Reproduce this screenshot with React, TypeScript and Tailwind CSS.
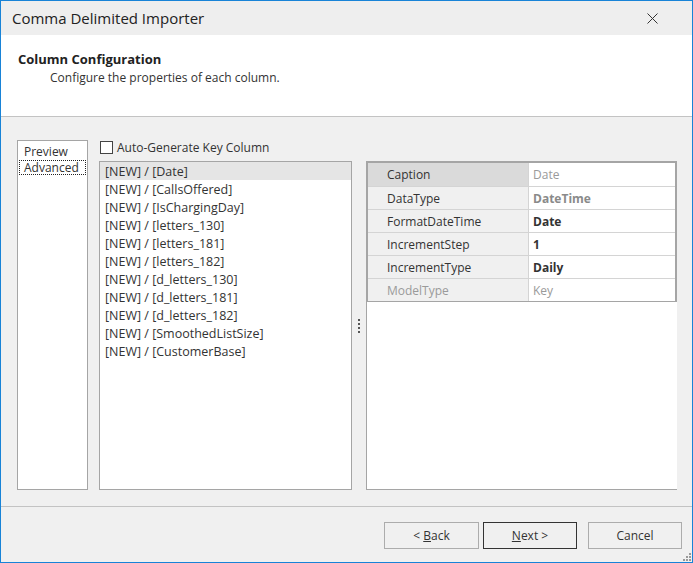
import React from 'react'

const font = { fontFamily: '"Segoe UI", "Open Sans", "Liberation Sans", sans-serif' }

const columns = [
  'Date',
  'CallsOffered',
  'IsChargingDay',
  'letters_130',
  'letters_181',
  'letters_182',
  'd_letters_130',
  'd_letters_181',
  'd_letters_182',
  'SmoothedListSize',
  'CustomerBase',
]

interface PropRow {
  label: string
  value: string
  labelClass: string
  valueClass: string
  selected?: boolean
}

const props: PropRow[] = [
  { label: 'Caption', value: 'Date', labelClass: 'text-[#333]', valueClass: 'text-[#9a9a9a]', selected: true },
  { label: 'DataType', value: 'DateTime', labelClass: 'text-[#333]', valueClass: 'text-[#8a8a8a] font-bold' },
  { label: 'FormatDateTime', value: 'Date', labelClass: 'text-[#333]', valueClass: 'text-[#333] font-bold' },
  { label: 'IncrementStep', value: '1', labelClass: 'text-[#333]', valueClass: 'text-[#333] font-bold' },
  { label: 'IncrementType', value: 'Daily', labelClass: 'text-[#333]', valueClass: 'text-[#333] font-bold' },
  { label: 'ModelType', value: 'Key', labelClass: 'text-[#9a9a9a]', valueClass: 'text-[#9a9a9a]' },
]

function Button({ children, primary, className }: { children: React.ReactNode; primary?: boolean; className?: string }) {
  return (
    <button
      className={`h-[27px] bg-[#f0f0f0] text-[12px] text-[#333] border ${
        primary ? 'border-[#333]' : 'border-[#acacac]'
      } ${className ?? ''}`}
    >
      {children}
    </button>
  )
}

export default function App() {
  return (
    <div
      style={font}
      className="w-[693px] h-[563px] border border-[#1883d7] bg-[#f0f0f0] flex flex-col box-border relative"
    >
      {/* title bar */}
      <div className="h-[34px] bg-[#eeeeee] flex items-center justify-between pl-[11px] pr-[34px] shrink-0">
        <span className="text-[15px] text-[#222]">Comma Delimited Importer</span>
        <svg width="11" height="11" viewBox="0 0 11 11">
          <path d="M0.5 0.5 L10.5 10.5 M10.5 0.5 L0.5 10.5" stroke="#333" strokeWidth="1" />
        </svg>
      </div>

      {/* header */}
      <div className="h-[82px] bg-white border-b border-[#c3c3c3] pt-[15px] pl-[17px] shrink-0">
        <div className="text-[13px] font-bold text-[#222] leading-[18px]">Column Configuration</div>
        <div className="text-[12px] text-[#333] leading-[18px] pl-[32px] mt-[1px]">
          Configure the properties of each column.
        </div>
      </div>

      {/* body */}
      <div className="flex-1 flex pt-[23px] pl-[16px] pr-[15px] pb-[16px] min-h-0">
        <div className="w-[71px] bg-white border border-[#a5a5a5] text-[12px] text-[#333] pt-[2px] pl-[1px] pr-[1px]">
          <div className="h-[17px] leading-[17px] pl-[5px]">Preview</div>
          <div className="h-[15px] leading-[13px] pl-[4px] border border-dotted border-[#222]">Advanced</div>
        </div>

        <div className="w-[253px] ml-[11px] flex flex-col">
          <label className="h-[21px] flex items-start gap-[4px] pl-[1px] pt-[1px] text-[12px] text-[#333]">
            <span className="w-[13px] h-[13px] border border-[#444] bg-white shrink-0" />
            <span className="leading-[13px]">Auto-Generate Key Column</span>
          </label>
          <div className="flex-1 bg-white border border-[#a5a5a5]">
            {columns.map((c, i) => (
              <div
                key={c}
                className={`h-[18px] leading-[19px] pl-[5px] text-[12.5px] text-[#333] ${
                  i === 0 ? 'bg-[#e5e5e5]' : ''
                }`}
              >
                [NEW] / [{c}]
              </div>
            ))}
          </div>
        </div>

        {/* splitter */}
        <div className="w-[14px] mt-[21px] flex flex-col items-center justify-center gap-[2px]">
          <span className="w-[2px] h-[2px] bg-[#555]" />
          <span className="w-[2px] h-[2px] bg-[#555]" />
          <span className="w-[2px] h-[2px] bg-[#555]" />
          <span className="w-[2px] h-[2px] bg-[#555]" />
        </div>

        <div className="w-[311px] mt-[21px] bg-white border-l border-t border-b border-[#a5a5a5]">
          <div className="border-t border-l border-b border-r-[2px] border-[#a5a5a5]">
            {props.map((p, i) => (
              <div
                key={p.label}
                className={`flex h-[23px] text-[12px] ${i > 0 ? 'border-t border-[#d4d4d4]' : ''}`}
              >
                <div
                  className={`w-[161px] pl-[19px] leading-[24px] border-r border-[#d4d4d4] ${
                    p.selected ? 'bg-[#dadada]' : 'bg-[#f0f0f0]'
                  } ${p.labelClass}`}
                >
                  {p.label}
                </div>
                <div className={`flex-1 pl-[4px] leading-[24px] ${p.valueClass}`}>{p.value}</div>
              </div>
            ))}
          </div>
        </div>
      </div>

      {/* footer */}
      <div className="h-[56px] border-t border-[#c3c3c3] flex justify-end items-start pt-[15px] pr-[10px] shrink-0">
        <Button className="w-[95px]">
          &lt; <span className="underline">B</span>ack
        </Button>
        <div className="w-[4px]" />
        <Button primary className="w-[94px]">
          <span className="underline">N</span>ext &gt;
        </Button>
        <div className="w-[11px]" />
        <Button className="w-[94px]">Cancel</Button>
      </div>

      <svg className="absolute right-[1px] bottom-[1px]" width="8" height="8" viewBox="0 0 8 8">
        <rect x="6" y="0" width="2" height="2" fill="#999" />
        <rect x="3" y="3" width="2" height="2" fill="#999" />
        <rect x="6" y="3" width="2" height="2" fill="#999" />
        <rect x="0" y="6" width="2" height="2" fill="#999" />
        <rect x="3" y="6" width="2" height="2" fill="#999" />
        <rect x="6" y="6" width="2" height="2" fill="#999" />
      </svg>
    </div>
  )
}
